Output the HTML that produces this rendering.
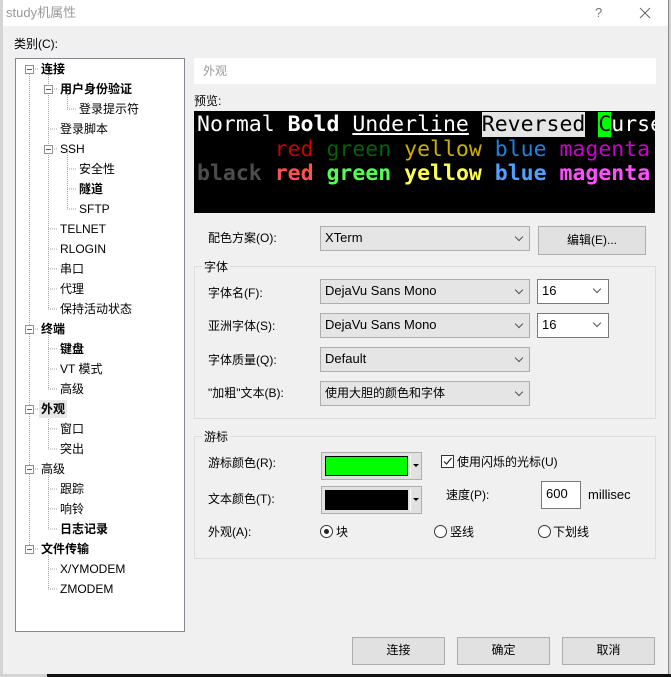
<!DOCTYPE html>
<html><head><meta charset="utf-8">
<style>
*{box-sizing:border-box;margin:0;padding:0}
body{width:671px;height:677px;background:#d4d4d4;position:relative;overflow:hidden;font-family:"Liberation Sans","Noto Sans CJK SC",sans-serif;font-size:12px;color:#000}
.win{position:absolute;left:3px;top:0;width:666px;height:674px;background:#f0f0f0;border-right:1px solid #888}
.title{position:absolute;left:0;top:0;width:665px;height:26px;background:#fff}
.a{position:absolute;white-space:nowrap;line-height:16px}
.box{position:absolute;border:1px solid #adadad;background:#e1e1e1}
.sel{position:absolute;border:1px solid #adadad;background:#e5e5e5;padding-left:4px;line-height:22px;font-size:13px}
.sel:after{content:"";position:absolute;right:7px;top:7px;width:5px;height:5px;border-right:1px solid #555;border-bottom:1px solid #555;transform:rotate(45deg)}
.inp{position:absolute;border:1px solid #7a7a7a;background:#fff;padding-left:4px;line-height:22px;font-size:13px}
.grp{position:absolute;border:1px solid #dcdcdc}
.btn{position:absolute;border:1px solid #adadad;background:#e1e1e1;text-align:center;line-height:25px}
.term{position:absolute;left:194px;top:111px;width:461px;height:102px;background:#000;overflow:hidden;font-family:"DejaVu Sans Mono",monospace;font-size:21.5px;line-height:24.5px;padding:2px 0 0 3px;white-space:pre}
.tree{position:absolute;left:15px;top:58px;width:170px;height:574px;background:#fff;border:1px solid #828790}
.t{position:absolute;white-space:nowrap;line-height:16px;font-size:12px}
.b{font-weight:bold}
.radio{position:absolute;width:13px;height:13px;border:1px solid #333;border-radius:50%;background:#fff}
</style></head><body>
<div class="win">
<div class="title"></div>
<div class="a" style="left:3px;top:5px;color:#999;font-size:13px;font-family:'Liberation Sans','Noto Sans CJK SC',sans-serif">study机属性</div>
<div class="a" style="left:592px;top:5px;color:#777;font-size:13px">?</div>
<svg style="position:absolute;left:636px;top:7px" width="12" height="12"><path d="M1 1L11 11M11 1L1 11" stroke="#666" stroke-width="1"/></svg>
<div class="a" style="left:11px;top:36px">类别(C):</div>
</div>

<div class="tree"></div>
<svg style="position:absolute;left:0;top:0" width="200" height="640">
<g stroke="#a0a0a0" stroke-dasharray="1,1" fill="none">
<path d="M29.5 74V549M48.5 69V309M67.5 89V109M67.5 149V209M48.5 329V389M48.5 409V449M48.5 469V529M48.5 549V589"/>
<path d="M33 69H39M33 329H39M33 409H39M33 469H39M33 549H39"/>
<path d="M52 89H58M52 149H58M48 129H58M48 229H58M48 249H58M48 269H58M48 289H58M48 309H58"/>
<path d="M67 109H77M67 169H77M67 189H77M67 209H77"/>
<path d="M48 349H58M48 369H58M48 389H58M48 429H58M48 449H58M48 489H58M48 509H58M48 529H58M48 569H58M48 589H58"/>
</g>
<g fill="#fff" stroke="#919191">
<rect x="25.5" y="65.5" width="8" height="8"/><rect x="44.5" y="85.5" width="8" height="8"/><rect x="44.5" y="145.5" width="8" height="8"/>
<rect x="25.5" y="325.5" width="8" height="8"/><rect x="25.5" y="405.5" width="8" height="8"/><rect x="25.5" y="465.5" width="8" height="8"/><rect x="25.5" y="545.5" width="8" height="8"/>
</g>
<g stroke="#3c5aa0"><path d="M27 69.5H32M46 89.5H51M46 149.5H51M27 329.5H32M27 409.5H32M27 469.5H32M27 549.5H32"/></g>
<rect x="39" y="400" width="28" height="18" fill="#e8e8e8"/>
</svg>
<div class="t b" style="left:41px;top:61px">连接</div>
<div class="t b" style="left:60px;top:81px">用户身份验证</div>
<div class="t" style="left:79px;top:101px">登录提示符</div>
<div class="t" style="left:60px;top:121px">登录脚本</div>
<div class="t" style="left:60px;top:141px">SSH</div>
<div class="t" style="left:79px;top:161px">安全性</div>
<div class="t b" style="left:79px;top:181px">隧道</div>
<div class="t" style="left:79px;top:201px">SFTP</div>
<div class="t" style="left:60px;top:221px">TELNET</div>
<div class="t" style="left:60px;top:241px">RLOGIN</div>
<div class="t" style="left:60px;top:261px">串口</div>
<div class="t" style="left:60px;top:281px">代理</div>
<div class="t" style="left:60px;top:301px">保持活动状态</div>
<div class="t b" style="left:41px;top:321px">终端</div>
<div class="t b" style="left:60px;top:341px">键盘</div>
<div class="t" style="left:60px;top:361px">VT 模式</div>
<div class="t" style="left:60px;top:381px">高级</div>
<div class="t b" style="left:41px;top:401px">外观</div>
<div class="t" style="left:60px;top:421px">窗口</div>
<div class="t" style="left:60px;top:441px">突出</div>
<div class="t" style="left:41px;top:461px">高级</div>
<div class="t" style="left:60px;top:481px">跟踪</div>
<div class="t" style="left:60px;top:501px">响铃</div>
<div class="t b" style="left:60px;top:521px">日志记录</div>
<div class="t b" style="left:41px;top:541px">文件传输</div>
<div class="t" style="left:60px;top:561px">X/YMODEM</div>
<div class="t" style="left:60px;top:581px">ZMODEM</div>

<div style="position:absolute;left:194px;top:58px;width:462px;height:26px;background:#fff"></div>
<div class="a" style="left:203px;top:63px;color:#999;font-size:12px">外观</div>
<div class="a" style="left:194px;top:93px">预览:</div>
<div class="term"><span style="color:#fff">Normal <b>Bold</b> <u>Underline</u> <span style="background:#e5e5e5;color:#000">Reversed</span> <span style="background:#0f0;color:#000">C</span>urse</span>
<span>      <span style="color:#cd0000">red</span> <span style="color:#006400">green</span> <span style="color:#cdb000">yellow</span> <span style="color:#1e82e6">blue</span> <span style="color:#cd00cd">magenta</span></span>
<b><span style="color:#4d4d4d">black</span> <span style="color:#ff5050">red</span> <span style="color:#50ff50">green</span> <span style="color:#ffff50">yellow</span> <span style="color:#50a0ff">blue</span> <span style="color:#ff50ff">magenta</span></b></div>

<div class="a" style="left:208px;top:230px">配色方案(O):</div>
<div class="sel" style="left:320px;top:226px;width:210px;height:25px">XTerm</div>
<div class="btn" style="left:538px;top:226px;width:108px;height:29px;line-height:27px">编辑(E)...</div>

<div class="grp" style="left:194px;top:266px;width:462px;height:153px"></div>
<div class="a" style="left:202px;top:259px;background:#f0f0f0;padding:0 2px">字体</div>
<div class="a" style="left:208px;top:285px">字体名(F):</div>
<div class="sel" style="left:320px;top:279px;width:210px;height:25px">DejaVu Sans Mono</div>
<div class="inp" style="left:537px;top:279px;width:72px;height:25px">16<span style="position:absolute;right:8px;top:6px;width:6px;height:6px;border-right:1px solid #555;border-bottom:1px solid #555;transform:rotate(45deg)"></span></div>
<div class="a" style="left:208px;top:318px">亚洲字体(S):</div>
<div class="sel" style="left:320px;top:313px;width:210px;height:25px">DejaVu Sans Mono</div>
<div class="inp" style="left:537px;top:313px;width:72px;height:25px">16<span style="position:absolute;right:8px;top:6px;width:6px;height:6px;border-right:1px solid #555;border-bottom:1px solid #555;transform:rotate(45deg)"></span></div>
<div class="a" style="left:208px;top:352px">字体质量(Q):</div>
<div class="sel" style="left:320px;top:347px;width:210px;height:25px">Default</div>
<div class="a" style="left:208px;top:385px">"加粗"文本(B):</div>
<div class="sel" style="left:320px;top:381px;width:210px;height:25px;font-size:12px">使用大胆的颜色和字体</div>

<div class="grp" style="left:194px;top:436px;width:462px;height:123px"></div>
<div class="a" style="left:202px;top:429px;background:#f0f0f0;padding:0 2px">游标</div>
<div class="a" style="left:208px;top:455px">游标颜色(R):</div>
<div class="box" style="left:321px;top:452px;width:101px;height:28px"><div style="position:absolute;left:3px;top:3px;width:83px;height:20px;background:#0f0;border:1px solid #000"></div><div style="position:absolute;left:88px;top:2px;width:1px;height:22px;background:#fff"></div><div style="position:absolute;left:91px;top:11px;border:3px solid transparent;border-top:3px solid #000"></div></div>
<div class="a" style="left:208px;top:491px">文本颜色(T):</div>
<div class="box" style="left:321px;top:486px;width:101px;height:28px"><div style="position:absolute;left:3px;top:3px;width:83px;height:20px;background:#000"></div><div style="position:absolute;left:88px;top:2px;width:1px;height:22px;background:#fff"></div><div style="position:absolute;left:91px;top:11px;border:3px solid transparent;border-top:3px solid #000"></div></div>
<div style="position:absolute;left:441px;top:455px;width:13px;height:13px;border:1px solid #333;background:#fff"></div>
<svg style="position:absolute;left:441px;top:455px" width="13" height="13"><path d="M3 6.5L5.5 9L10.5 3" stroke="#222" fill="none" stroke-width="1.2"/></svg>
<div class="a" style="left:457px;top:454px">使用闪烁的光标(U)</div>
<div class="a" style="left:446px;top:487px">速度(P):</div>
<div class="inp" style="left:541px;top:481px;width:40px;height:28px;line-height:24px">600</div>
<div class="a" style="left:588px;top:487px;font-size:13px">millisec</div>
<div class="a" style="left:208px;top:524px">外观(A):</div>
<div class="radio" style="left:320px;top:525px"><div style="position:absolute;left:3px;top:3px;width:5px;height:5px;border-radius:50%;background:#222"></div></div>
<div class="a" style="left:336px;top:524px">块</div>
<div class="radio" style="left:434px;top:525px"></div>
<div class="a" style="left:450px;top:524px">竖线</div>
<div class="radio" style="left:538px;top:525px"></div>
<div class="a" style="left:553px;top:524px">下划线</div>

<div class="btn" style="left:352px;top:637px;width:93px;height:28px">连接</div>
<div class="btn" style="left:457px;top:637px;width:93px;height:28px">确定</div>
<div class="btn" style="left:562px;top:637px;width:93px;height:28px">取消</div>
<div style="position:absolute;left:47px;top:674px;width:624px;height:3px;background:#111"></div>
</body></html>
